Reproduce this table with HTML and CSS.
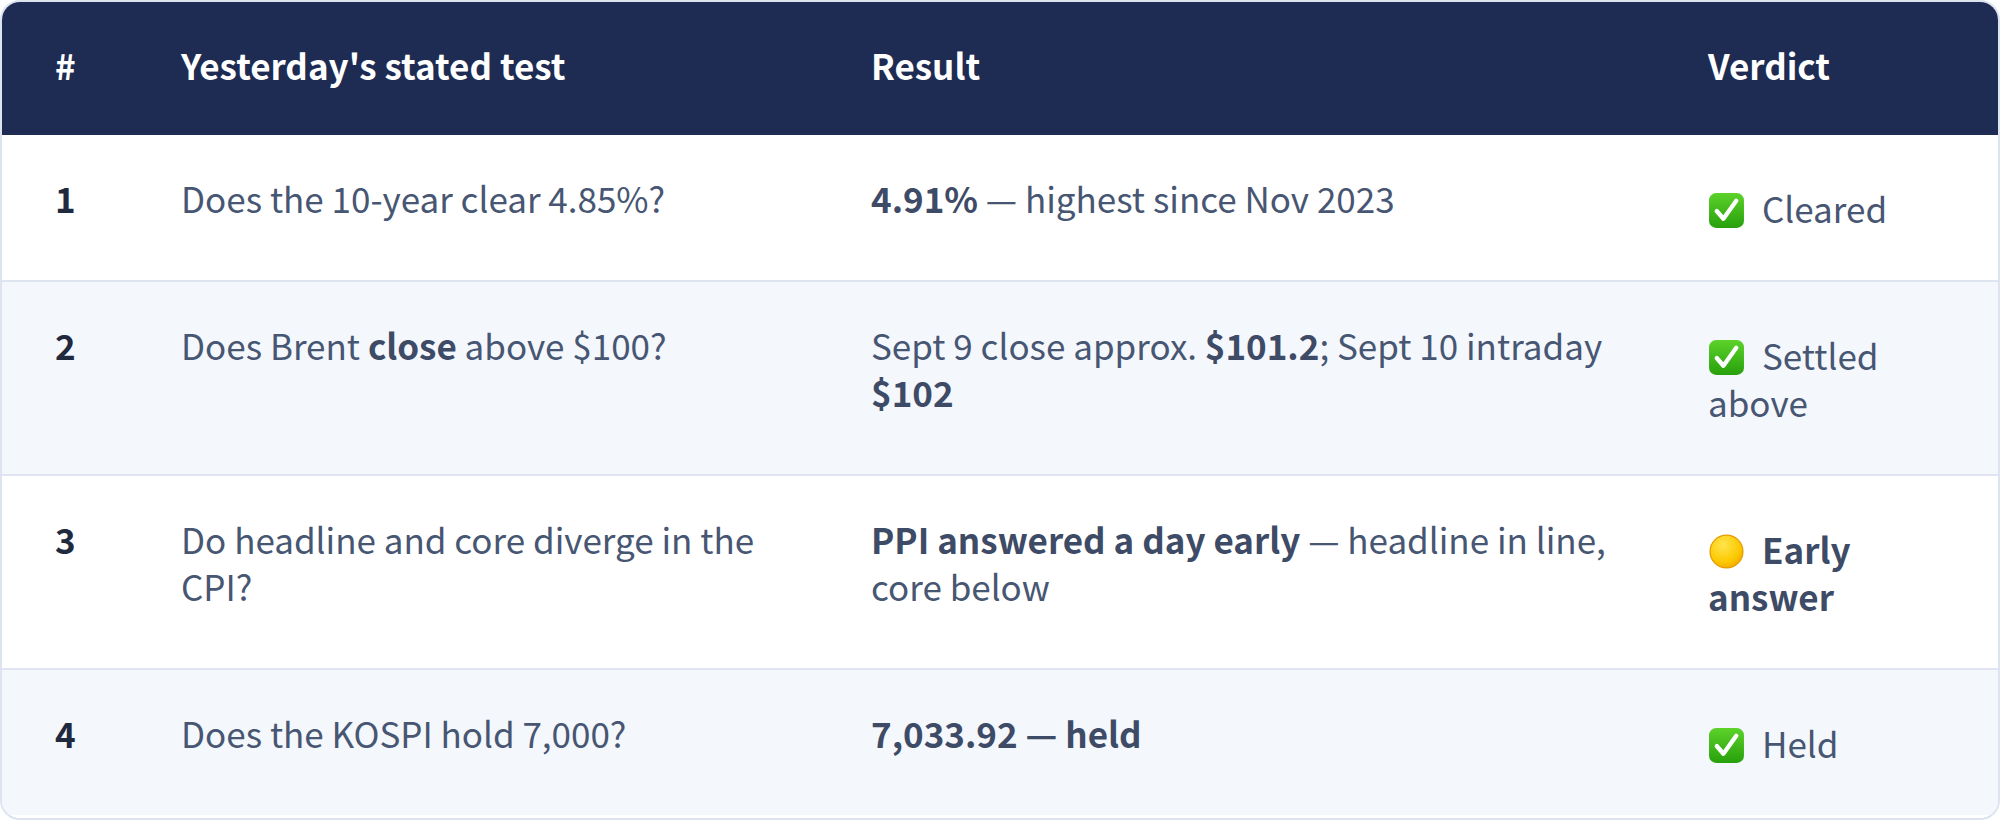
FILE: index.html
```html
<!DOCTYPE html>
<html lang="en">
<head>
<meta charset="utf-8">
<title>Test results</title>
<link rel="stylesheet" href="styles.css">
</head>
<body>
<div class="wrap">
  <table class="grid">
    <colgroup>
      <col class="c-num">
      <col class="c-test">
      <col class="c-result">
      <col class="c-verdict">
    </colgroup>
    <thead>
      <tr>
        <th class="num">#</th>
        <th class="test">Yesterday's stated test</th>
        <th class="result">Result</th>
        <th class="verdict">Verdict</th>
      </tr>
    </thead>
    <tbody>
      <tr>
        <td class="num">1</td>
        <td class="test">Does the 10-year clear 4.85%?</td>
        <td class="result"><b>4.91%</b> — highest since Nov 2023</td>
        <td class="verdict"><span class="vbox"><svg class="ico" viewBox="0 0 36 36" aria-hidden="true"><defs><linearGradient id="g1" x1="0" y1="0" x2="0" y2="1"><stop offset="0" stop-color="#5cd22a"/><stop offset="1" stop-color="#27a00c"/></linearGradient></defs><rect x="1" y="1" width="34" height="34" rx="7" fill="url(#g1)"/><path d="M8.5 18.5 L15 26 L27.5 8.5" fill="none" stroke="#fff" stroke-width="4.2" stroke-linecap="round" stroke-linejoin="round"/></svg>Cleared</span></td>
      </tr>
      <tr class="alt">
        <td class="num">2</td>
        <td class="test">Does Brent <b>close</b> above $100?</td>
        <td class="result">Sept 9 close approx. <b>$101.2</b>; Sept 10 intraday <b>$102</b></td>
        <td class="verdict"><span class="vbox"><svg class="ico" viewBox="0 0 36 36" aria-hidden="true"><defs><linearGradient id="g2" x1="0" y1="0" x2="0" y2="1"><stop offset="0" stop-color="#5cd22a"/><stop offset="1" stop-color="#27a00c"/></linearGradient></defs><rect x="1" y="1" width="34" height="34" rx="7" fill="url(#g2)"/><path d="M8.5 18.5 L15 26 L27.5 8.5" fill="none" stroke="#fff" stroke-width="4.2" stroke-linecap="round" stroke-linejoin="round"/></svg>Settled above</span></td>
      </tr>
      <tr>
        <td class="num">3</td>
        <td class="test">Do headline and core diverge in the CPI?</td>
        <td class="result"><b>PPI answered a day early</b> — headline in line, core below</td>
        <td class="verdict"><span class="vbox strong"><svg class="ico" viewBox="0 0 36 36" aria-hidden="true"><defs><radialGradient id="y1" cx="0.4" cy="0.3" r="0.75"><stop offset="0" stop-color="#ffe54d"/><stop offset="0.7" stop-color="#fcc800"/><stop offset="1" stop-color="#f0a800"/></radialGradient></defs><circle cx="18" cy="18" r="16" fill="url(#y1)" stroke="#e69b00" stroke-width="1.2"/></svg>Early answer</span></td>
      </tr>
      <tr class="alt">
        <td class="num">4</td>
        <td class="test">Does the KOSPI hold 7,000?</td>
        <td class="result"><b>7,033.92 — held</b></td>
        <td class="verdict"><span class="vbox"><svg class="ico" viewBox="0 0 36 36" aria-hidden="true"><defs><linearGradient id="g4" x1="0" y1="0" x2="0" y2="1"><stop offset="0" stop-color="#5cd22a"/><stop offset="1" stop-color="#27a00c"/></linearGradient></defs><rect x="1" y="1" width="34" height="34" rx="7" fill="url(#g4)"/><path d="M8.5 18.5 L15 26 L27.5 8.5" fill="none" stroke="#fff" stroke-width="4.2" stroke-linecap="round" stroke-linejoin="round"/></svg>Held</span></td>
      </tr>
    </tbody>
  </table>
</div>
</body>
</html>
```

FILE: styles.css
```css
html, body {
  margin: 0;
  padding: 0;
  background: #ffffff;
}

body {
  font-family: "Noto Sans CJK KR", "Noto Sans", sans-serif;
  color: #475672;
}

.wrap {
  width: 2000px;
  height: 820px;
  box-sizing: border-box;
  border: 2px solid #dde4f0;
  border-radius: 20px;
  overflow: hidden;
  background: #ffffff;
}

.grid {
  width: 100%;
  border-collapse: collapse;
  table-layout: fixed;
}

.c-num { width: 179px; }
.c-test { width: 690px; }
.c-result { width: 837px; }
.c-verdict { width: auto; }

thead th {
  background: #1e2c53;
  color: #ffffff;
  font-weight: 700;
  font-size: 35px;
  line-height: 47px;
  text-align: left;
  height: 133px;
  padding: 0 0 8px 0;
  box-sizing: border-box;
  vertical-align: middle;
}

thead th.num {
  padding-left: 53px;
}

td {
  font-size: 35px;
  line-height: 47px;
  padding: 39px 0 39px 0;
  vertical-align: top;
  text-align: left;
}

tbody tr {
  border-top: 2px solid #dfe5f0;
}

tbody tr:first-child {
  border-top: none;
}

tbody tr.alt {
  background: #f4f7fc;
}

td.num {
  padding-left: 53px;
  font-weight: 700;
  color: #1f2a3f;
}

td.test { padding-right: 90px; }
td.result { padding-right: 68px; }
td.verdict { padding-right: 55px; }

b {
  font-weight: 700;
  color: #3e4b66;
}

.vbox {
  display: inline-block;
  padding: 10px 0;
}

.vbox.strong {
  font-weight: 700;
  color: #3e4b66;
}

.ico {
  width: 37px;
  height: 37px;
  vertical-align: -6px;
  margin-right: 17px;
}
```
